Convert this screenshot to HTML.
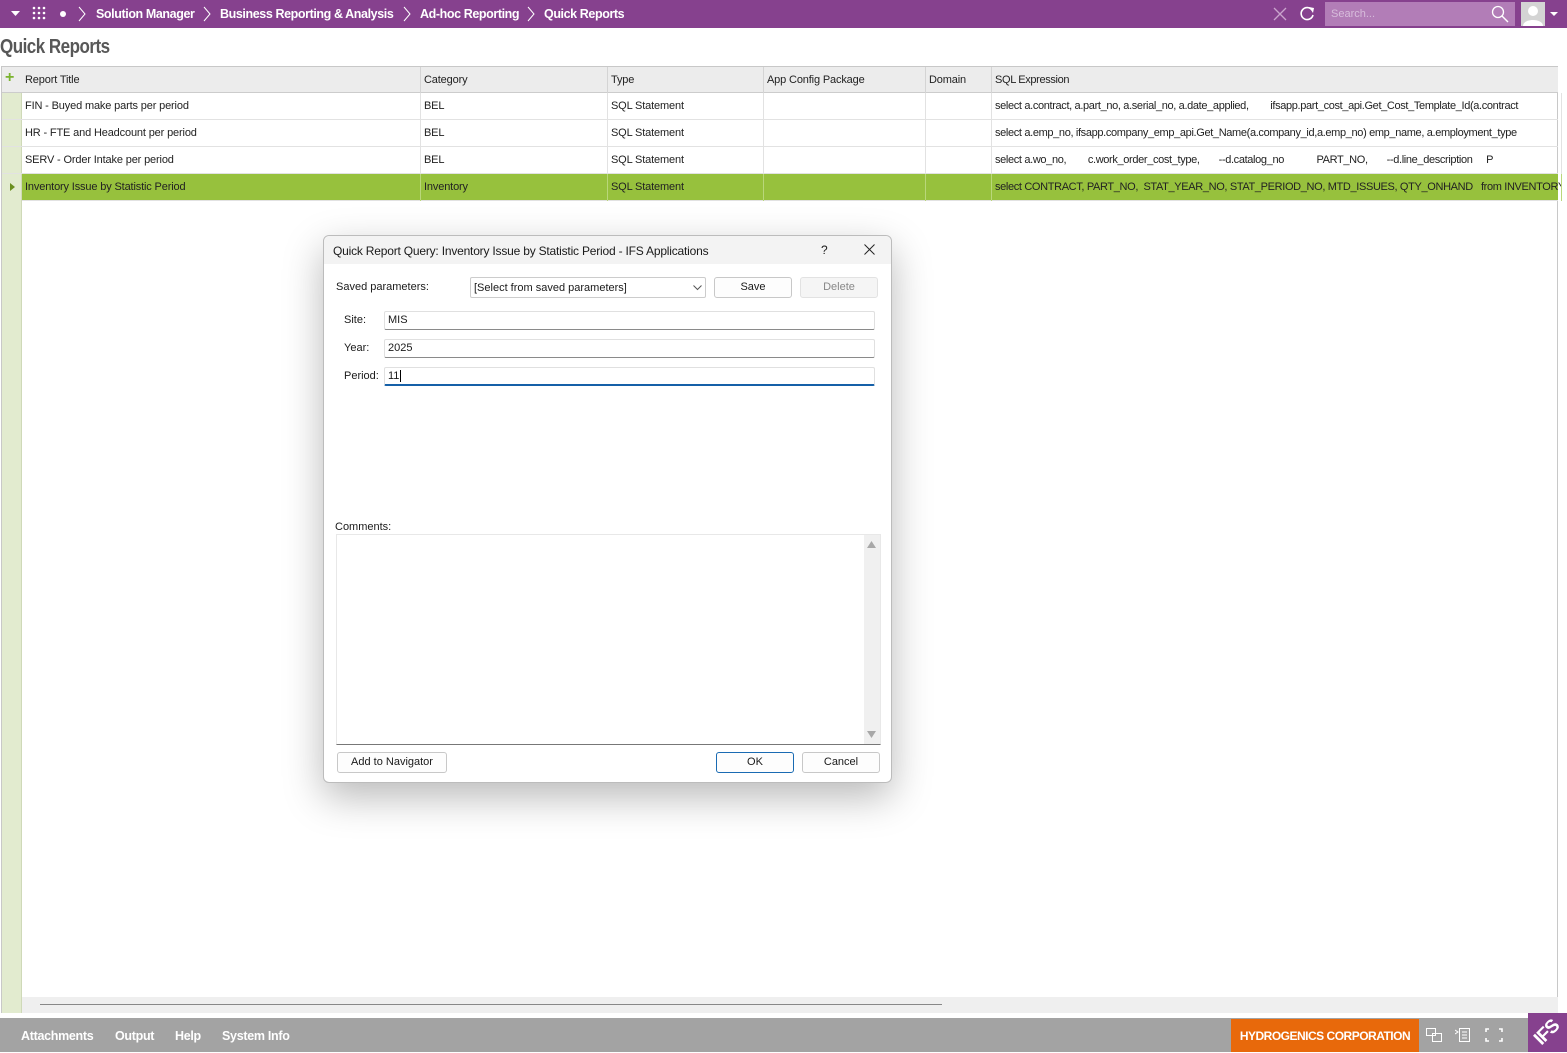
<!DOCTYPE html>
<html><head><meta charset="utf-8"><style>
*{box-sizing:border-box;margin:0;padding:0}
body{width:1567px;height:1052px;position:relative;overflow:hidden;background:#fff;font-family:"Liberation Sans",sans-serif;font-size:11px;color:#222}
.abs{position:absolute}
#top{left:0;top:0;width:1567px;height:28px;background:#86418e;color:#fff;font-weight:bold;font-size:12.5px}
#top span{position:absolute;top:7px;letter-spacing:-.4px}
.grid{left:1px;top:66px;width:1557px;height:947px;border:1px solid #c8c8c8;border-bottom:none;letter-spacing:-.15px}
.row{position:absolute;left:0;width:1556px;height:27px;border-bottom:1px solid #e2e2e2}
.row div{position:absolute;top:0;height:27px;line-height:27px;padding-left:3px;white-space:nowrap;overflow:hidden;border-right:1px solid #e2e2e2}
.c5{letter-spacing:-.35px}
.hdr{background:#ececec;height:26px;border-bottom:1px solid #ccc}
.hdr div{border-right:1px solid #d4d4d4;line-height:26px;height:26px}
.sel{background:#97c13d}
.sel div{border-right-color:#b9d77a}
.c0{left:20px;width:399px}.c1{left:419px;width:187px}.c2{left:606px;width:156px}.c3{left:762px;width:162px}.c4{left:924px;width:66px}.c5{left:990px;width:570px}
.dlg{left:323px;top:235px;width:569px;height:548px;background:#fff;border:1px solid #bcbcbc;border-radius:6px;box-shadow:0 14px 40px rgba(0,0,0,.28);font-family:"Liberation Sans",sans-serif;font-size:11px;color:#1a1a1a}
.inp{position:absolute;left:60px;width:491px;height:19px;border:1px solid #e0e0e0;border-bottom:1px solid #8a8a8a;padding-left:3px;line-height:17px;border-radius:2px}
.btn{position:absolute;height:21px;border:1px solid #c8c8c8;border-radius:3px;text-align:center;line-height:19px;background:#fdfdfd}
</style></head><body>
<div id="top" class="abs">
<svg class="abs" style="left:11px;top:11px" width="9" height="6"><path d="M0 0h9L4.5 5z" fill="#fff"/></svg>
<svg class="abs" style="left:32px;top:6px" width="15" height="15" fill="#fff"><circle cx="2" cy="2" r="1.3"/><circle cx="7" cy="2" r="1.3"/><circle cx="12" cy="2" r="1.3"/><circle cx="2" cy="7" r="1.3"/><circle cx="7" cy="7" r="1.3"/><circle cx="12" cy="7" r="1.3"/><circle cx="2" cy="12" r="1.3"/><circle cx="7" cy="12" r="1.3"/><circle cx="12" cy="12" r="1.3"/></svg>
<svg class="abs" style="left:59px;top:10px" width="8" height="8"><circle cx="4" cy="4" r="3" fill="#fff"/></svg>
<svg class="abs" style="left:78px;top:6px" width="8" height="16"><path d="M1 1l6 7-6 7" stroke="#fff" fill="none"/></svg>
<span style="left:96px">Solution Manager</span>
<svg class="abs" style="left:203px;top:6px" width="8" height="16"><path d="M1 1l6 7-6 7" stroke="#fff" fill="none"/></svg>
<span style="left:220px">Business Reporting &amp; Analysis</span>
<svg class="abs" style="left:403px;top:6px" width="8" height="16"><path d="M1 1l6 7-6 7" stroke="#fff" fill="none"/></svg>
<span style="left:420px">Ad-hoc Reporting</span>
<svg class="abs" style="left:527px;top:6px" width="8" height="16"><path d="M1 1l6 7-6 7" stroke="#fff" fill="none"/></svg>
<span style="left:544px">Quick Reports</span>
<svg class="abs" style="left:1273px;top:7px" width="14" height="14"><path d="M1 1l12 12M13 1L1 13" stroke="#c9a3cd" stroke-width="1.3"/></svg>
<svg class="abs" style="left:1299px;top:5px" width="17" height="17"><path d="M13 5A6 6 0 1 0 14 10" stroke="#fff" stroke-width="1.6" fill="none"/><path d="M10 2l5 1-1 5z" fill="#fff"/></svg>
<div class="abs" style="left:1325px;top:2px;width:190px;height:24px;background:#b27db7"></div>
<span style="left:1331px;top:8px;font-weight:normal;font-size:11px;color:#d7bcdb;letter-spacing:0">Search...</span>
<svg class="abs" style="left:1491px;top:5px" width="18" height="18"><circle cx="7" cy="7" r="5.5" stroke="#fff" stroke-width="1.3" fill="none"/><path d="M11 11l6 6" stroke="#fff" stroke-width="1.4"/></svg>
<div class="abs" style="left:1521px;top:2px;width:24px;height:24px;background:#d4d4d4;overflow:hidden"><svg width="24" height="24"><circle cx="12" cy="9" r="5" fill="#fff"/><path d="M2 24c0-8 20-8 20 0z" fill="#fff"/></svg></div>
<svg class="abs" style="left:1550px;top:12px" width="8" height="5"><path d="M0 0h8L4 4z" fill="#fff"/></svg>
</div>
<div class="abs" style="left:0;top:36px;font-size:20px;font-weight:bold;color:#585858;letter-spacing:-.6px;transform:scaleX(.85);transform-origin:left">Quick Reports</div>

<div class="abs grid">
<div class="abs" style="left:0;top:26px;width:20px;height:921px;background:#e2ebcf;border-right:1px solid #cfd9b8"></div>
<div class="row hdr" style="top:0"><div style="left:0;width:20px;border:none;color:#7ab32e;font-size:16px;font-weight:bold;line-height:22px;padding-left:3px">+</div><div class="c0">Report Title</div><div class="c1">Category</div><div class="c2">Type</div><div class="c3">App Config Package</div><div class="c4">Domain</div><div class="c5" style="border:none">SQL Expression</div></div>
<div class="row" style="top:26px"><div class="c0">FIN - Buyed make parts per period</div><div class="c1">BEL</div><div class="c2">SQL Statement</div><div class="c3"></div><div class="c4"></div><div class="c5">select a.contract, a.part_no, a.serial_no, a.date_applied, &nbsp;&nbsp;&nbsp;&nbsp;&nbsp;&nbsp;&nbsp;ifsapp.part_cost_api.Get_Cost_Template_Id(a.contract</div></div>
<div class="row" style="top:53px"><div class="c0">HR - FTE and Headcount per period</div><div class="c1">BEL</div><div class="c2">SQL Statement</div><div class="c3"></div><div class="c4"></div><div class="c5">select a.emp_no, ifsapp.company_emp_api.Get_Name(a.company_id,a.emp_no) emp_name, a.employment_type</div></div>
<div class="row" style="top:80px"><div class="c0">SERV - Order Intake per period</div><div class="c1">BEL</div><div class="c2">SQL Statement</div><div class="c3"></div><div class="c4"></div><div class="c5">select a.wo_no, &nbsp;&nbsp;&nbsp;&nbsp;&nbsp;&nbsp;&nbsp;c.work_order_cost_type, &nbsp;&nbsp;&nbsp;&nbsp;&nbsp;&nbsp;--d.catalog_no &nbsp;&nbsp;&nbsp;&nbsp;&nbsp;&nbsp;&nbsp;&nbsp;&nbsp;&nbsp;&nbsp;PART_NO, &nbsp;&nbsp;&nbsp;&nbsp;&nbsp;&nbsp;--d.line_description &nbsp;&nbsp;&nbsp;&nbsp;P</div></div>
<div class="row sel" style="top:107px"><div style="left:0;width:20px;background:#e2ebcf;border-right:1px solid #cfd9b8"><svg style="margin:9px 0 0 5px;display:block" width="5" height="8"><path d="M0 0l5 4-5 4z" fill="#6a8f1f"/></svg></div><div class="c0">Inventory Issue by Statistic Period</div><div class="c1">Inventory</div><div class="c2">SQL Statement</div><div class="c3"></div><div class="c4"></div><div class="c5">select CONTRACT, PART_NO, &nbsp;STAT_YEAR_NO, STAT_PERIOD_NO, MTD_ISSUES, QTY_ONHAND &nbsp;&nbsp;from INVENTORY</div></div>
<div class="abs" style="left:20px;top:930px;width:1536px;height:17px;background:#efefef"></div>
<div class="abs" style="left:38px;top:937px;width:902px;height:1px;background:#888"></div>
</div>
<div class="abs" style="left:0;top:1013px;width:1567px;height:5px;background:#fff"></div>
<div class="abs" style="left:0;top:1018px;width:1567px;height:34px;background:#a3a3a3;color:#fff;font-weight:bold;font-size:12.5px;letter-spacing:-.3px">
<span class="abs" style="left:21px;top:11px">Attachments</span><span class="abs" style="left:115px;top:11px">Output</span><span class="abs" style="left:175px;top:11px">Help</span><span class="abs" style="left:222px;top:11px">System Info</span>
<div class="abs" style="left:1231px;top:1px;width:188px;height:33px;background:#e8690b;font-size:12px;line-height:34px;text-align:center;letter-spacing:-.5px">HYDROGENICS CORPORATION</div>
<svg class="abs" style="left:1426px;top:10px" width="16" height="14" fill="none" stroke="#fff"><rect x=".5" y=".5" width="9" height="7"/><rect x="6.5" y="5.5" width="9" height="8"/></svg>
<svg class="abs" style="left:1455px;top:9px" width="15" height="15" fill="none" stroke="#fff"><rect x="4.5" y="1.5" width="10" height="13"/><path d="M7 5h5M7 8h5M7 11h5M0 3l3 2-3 2"/></svg>
<svg class="abs" style="left:1485px;top:10px" width="18" height="14" fill="none" stroke="#fff" stroke-width="1.6"><path d="M1 4V1h3M14 1h3v3M17 10v3h-3M4 13H1v-3"/></svg>
</div>
<div class="abs" style="left:1528px;top:1013px;width:39px;height:39px;background:#86418e;overflow:hidden"><div style="color:#fff;font-weight:bold;font-size:19px;transform:rotate(-45deg);position:absolute;left:6px;top:9px;letter-spacing:-1px">IFS</div></div>

<div class="abs dlg">
<div class="abs" style="left:0;top:0;width:567px;height:28px;background:#f3f3f3;border-radius:6px 6px 0 0"></div>
<div class="abs" style="left:9px;top:8px;font-size:12px;letter-spacing:-.2px">Quick Report Query: Inventory Issue by Statistic Period - IFS Applications</div>
<div class="abs" style="left:497px;top:7px;font-size:12px">?</div>
<svg class="abs" style="left:540px;top:8px" width="11" height="11"><path d="M.5.5l10 10M10.5.5l-10 10" stroke="#222"/></svg>
<div class="abs" style="left:12px;top:45px">Saved parameters:</div>
<div class="abs" style="left:146px;top:41px;width:236px;height:21px;border:1px solid #ccc;border-radius:2px;padding:5px 3px;line-height:11px">[Select from saved parameters]<svg class="abs" style="left:222px;top:7px" width="9" height="6"><path d="M.5.5l4 4 4-4" stroke="#555" fill="none"/></svg></div>
<div class="btn" style="left:390px;top:41px;width:78px">Save</div>
<div class="btn" style="left:476px;top:41px;width:78px;color:#888;background:#f5f5f5;border-color:#e2e2e2">Delete</div>
<div class="abs" style="left:20px;top:78px">Site:</div><div class="inp" style="top:75px">MIS</div>
<div class="abs" style="left:20px;top:106px">Year:</div><div class="inp" style="top:103px">2025</div>
<div class="abs" style="left:20px;top:134px">Period:</div><div class="inp" style="top:131px;border-bottom:2px solid #1560a8">11<span style="border-left:1px solid #000;margin-left:1px"></span></div>
<div class="abs" style="left:11px;top:285px">Comments:</div>
<div class="abs" style="left:12px;top:298px;width:545px;height:211px;border:1px solid #e8e8e8;border-bottom:1px solid #777"></div>
<div class="abs" style="left:540px;top:299px;width:16px;height:209px;background:#f0f0f0"></div>
<svg class="abs" style="left:543px;top:305px" width="9" height="7"><path d="M0 7L4.5 0 9 7z" fill="#a8a8a8"/></svg>
<svg class="abs" style="left:543px;top:495px" width="9" height="7"><path d="M0 0h9L4.5 7z" fill="#a8a8a8"/></svg>
<div class="btn" style="left:13px;top:516px;width:110px">Add to Navigator</div>
<div class="btn" style="left:392px;top:516px;width:78px;border-color:#1a6bb3">OK</div>
<div class="btn" style="left:478px;top:516px;width:78px">Cancel</div>
</div>
</body></html>
